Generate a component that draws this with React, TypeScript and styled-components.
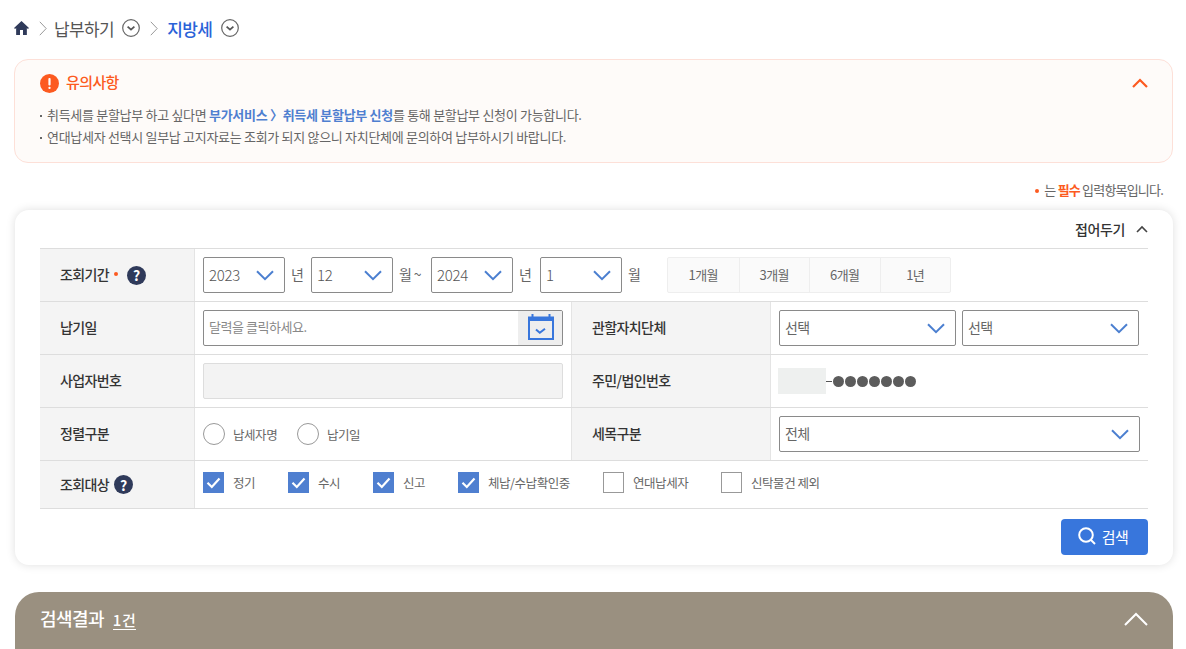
import React from "react";
import styled, { createGlobalStyle } from "styled-components";

const GlobalStyle = createGlobalStyle`
  html, body {
    margin: 0;
    padding: 0;
    height: 649px;
    overflow: hidden;
    background: #fff;
  }
  * { box-sizing: border-box; }
  body {
    font-family: "Noto Sans CJK KR", "Noto Sans", sans-serif;
    color: #555;
    letter-spacing: -0.6px;
  }
`;

const Page = styled.div`
  width: 1186px;
  padding: 0 13px 0 14px;
`;

// --- breadcrumb ---
const Breadcrumb = styled.nav`
  display: flex;
  align-items: center;
  height: 59px;
  padding-bottom: 3px;
`;

const CrumbText = styled.span<{ $active?: boolean }>`
  font-size: 17px;
  font-weight: ${(p) => (p.$active ? 500 : 400)};
  color: ${(p) => (p.$active ? "#2a62d8" : "#555")};
  margin: ${(p) => (p.$active ? "0 9px" : "0 8px 0 7px")};
`;

const CrumbSep = styled.svg`
  width: 8px;
  height: 15px;
  margin-left: 10px;
`;

const CrumbToggle = styled.svg`
  width: 18px;
  height: 18px;
`;

// --- notice ---
const Notice = styled.section`
  height: 104px;
  border: 1px solid #fde0d8;
  border-radius: 14px;
  background: #fefbf9;
  padding: 13px 24px 0 25px;
`;

const NoticeHead = styled.div`
  display: flex;
  align-items: center;
  gap: 7px;
  height: 20px;
`;

const NoticeTitle = styled.h2`
  margin: 0;
  padding-bottom: 3px;
  flex: 1;
  font-size: 15px;
  font-weight: 500;
  color: #fc5a20;
`;

const NoticeList = styled.ul`
  list-style: none;
  margin: 11px 0 0;
  padding: 0;
`;

const NoticeItem = styled.li`
  position: relative;
  padding-left: 7px;
  font-size: 13px;
  line-height: 22px;
  letter-spacing: -0.3px;
  color: #666;
  &::before {
    content: "";
    position: absolute;
    left: 0;
    top: 11px;
    width: 2px;
    height: 2px;
    background: #666;
  }
`;

const NoticeLink = styled.strong`
  color: #4f7fd0;
  font-weight: 700;
`;

const RequiredNote = styled.p`
  margin: 0;
  height: 47px;
  padding: 18px 10px 0 0;
  text-align: right;
  font-size: 13px;
  line-height: 18px;
  letter-spacing: -0.8px;
  color: #666;
`;

const Dot = styled.span`
  display: inline-block;
  flex: none;
  width: 4px;
  height: 4px;
  border-radius: 50%;
  background: #fc5a20;
  vertical-align: middle;
`;

const NoteDot = styled(Dot)`
  margin-right: 3px;
`;

const LabelDot = styled(Dot)`
  margin-left: 5px;
`;

const RequiredWord = styled.strong`
  color: #fc5a20;
  font-weight: 700;
`;

// --- search card ---
const Card = styled.section`
  height: 355px;
  margin-left: 1px;
  background: #fff;
  border-radius: 14px;
  box-shadow: 0 0 10px rgba(0, 0, 0, 0.13);
  padding: 0 25px;
`;

const FoldBar = styled.div`
  display: flex;
  justify-content: flex-end;
  align-items: center;
  gap: 11px;
  height: 38px;
  font-size: 14px;
  font-weight: 500;
  letter-spacing: -0.4px;
  color: #333;
`;

const Table = styled.div`
  border-top: 1px solid #ddd;
`;

const Row = styled.div<{ $height?: number }>`
  display: grid;
  grid-template-columns: 155px 376px 200px 1fr;
  height: ${(p) => p.$height ?? 53}px;
  border-bottom: 1px solid #ddd;
`;

const Label = styled.div`
  display: flex;
  align-items: center;
  padding: 0 0 2px 20px;
  background: #f4f4f4;
  border-right: 1px solid #e4e4e4;
  font-size: 14px;
  font-weight: 500;
  color: #333;
`;

const Label2 = styled(Label)`
  border-left: 1px solid #e4e4e4;
`;

const Cell = styled.div<{ $span?: boolean; $lift?: number }>`
  display: flex;
  align-items: center;
  padding: 0 0 ${(p) => p.$lift ?? 0}px 8px;
  grid-column: ${(p) => (p.$span ? "span 3" : "auto")};
  font-size: 13px;
  color: #555;
`;

const Help = styled.span<{ $left: number }>`
  display: inline-flex;
  align-items: center;
  justify-content: center;
  width: 19px;
  height: 19px;
  margin: 2px 0 0 ${(p) => p.$left}px;
  border-radius: 50%;
  background: #2f3a5a;
  color: #fff;
  font-size: 14px;
  font-weight: 700;
  letter-spacing: 0;
`;

const SelectBox = styled.div<{ $width: number; $gap?: number }>`
  display: flex;
  align-items: center;
  justify-content: space-between;
  flex: none;
  width: ${(p) => p.$width}px;
  height: 36px;
  margin-left: ${(p) => p.$gap ?? 0}px;
  padding: 0 10px 2px 5px;
  border: 1px solid #8a8a8a;
  border-radius: 2px;
  background: #fff;
  font-size: 14px;
  color: #666;
`;

const SelectValue = styled.span<{ $digits?: boolean }>`
  font-size: ${(p) => (p.$digits ? 15 : 14)}px;
  font-weight: ${(p) => (p.$digits ? 300 : 400)};
  letter-spacing: ${(p) => (p.$digits ? "-0.3px" : "-0.6px")};
  color: ${(p) => (p.$digits ? "#555" : "#666")};
`;

const Unit = styled.span<{ $width: number }>`
  flex: none;
  width: ${(p) => p.$width}px;
  padding: 0 0 2px 6px;
  font-size: 14px;
  color: #666;
  white-space: nowrap;
`;

const SelectChevron = styled.svg`
  width: 18px;
  height: 11px;
  margin-top: 2px;
`;

const Quick = styled.div`
  display: flex;
  height: 36px;
  border: 1px solid #eee;
  border-radius: 2px;
  background: #fafafa;
`;

const QuickItem = styled.span`
  width: 70.5px;
  display: flex;
  align-items: center;
  justify-content: center;
  padding-bottom: 2px;
  font-size: 13px;
  color: #666;
  & + & {
    border-left: 1px solid #eee;
  }
`;

const DateField = styled.div`
  display: flex;
  width: 360px;
  height: 36px;
  border: 1px solid #8a8a8a;
  border-radius: 2px;
  overflow: hidden;
`;

const DateText = styled.span`
  flex: 1;
  padding-left: 5px;
  font-size: 13px;
  line-height: 32px;
  letter-spacing: -0.45px;
  color: #888;
`;

const CalendarButton = styled.span`
  width: 44px;
  display: flex;
  align-items: center;
  justify-content: center;
  padding: 0 0 2px 2px;
  background: #eee;
`;

const DisabledField = styled.div`
  width: 360px;
  height: 36px;
  border: 1px solid #ddd;
  border-radius: 2px;
  background: #f3f3f3;
`;

const Masked = styled.div`
  display: flex;
  align-items: center;
  margin-left: -1px;
  color: #555;
`;

const MaskBox = styled.span`
  width: 48px;
  height: 26px;
  background: #eef0ef;
`;

const MaskDash = styled.span`
  width: 6px;
  height: 1px;
  margin-right: 1px;
  background: #555;
`;

const MaskDot = styled.span`
  width: 11px;
  height: 11px;
  margin-right: 1px;
  border-radius: 50%;
  background: #5c5c5c;
`;

const Option = styled.label<{ $width: number }>`
  display: flex;
  align-items: center;
  width: ${(p) => p.$width}px;
  font-size: 12.5px;
  letter-spacing: -0.45px;
  color: #666;
  white-space: nowrap;
`;

const Radio = styled.span`
  width: 22px;
  height: 22px;
  margin-right: 8px;
  border: 1px solid #999;
  border-radius: 50%;
  background: #fff;
`;

const Check = styled.span<{ $on?: boolean }>`
  display: flex;
  align-items: center;
  justify-content: center;
  width: 21px;
  height: 21px;
  margin-right: 9px;
  border: ${(p) => (p.$on ? "none" : "1px solid #999")};
  background: ${(p) => (p.$on ? "#4f7fd0" : "#fff")};
`;

const CardActions = styled.div`
  display: flex;
  justify-content: flex-end;
  padding-top: 10px;
`;

const SearchButton = styled.button`
  display: flex;
  align-items: center;
  justify-content: center;
  gap: 6px;
  width: 87px;
  height: 36px;
  padding: 0 3px 2px 0;
  border: none;
  border-radius: 4px;
  background: #3876dc;
  color: #fff;
  font-family: inherit;
  font-size: 15px;
  letter-spacing: -0.6px;
`;

// --- result ---
const ResultBar = styled.section`
  display: flex;
  align-items: center;
  height: 57px;
  margin: 27px 0 0 1px;
  padding: 0 25px 3px;
  border-radius: 24px 24px 0 0;
  background: #9a9080;
  color: #fff;
`;

const ResultTitle = styled.h2`
  margin: 0 9px 0 0;
  padding-bottom: 3px;
  font-size: 18px;
  font-weight: 500;
`;

const ResultCount = styled.span`
  flex: 1;
  font-size: 15px;
  font-weight: 500;
  letter-spacing: 0.6px;
`;

const CountText = styled.span`
  display: inline-block;
  line-height: 19px;
  border-bottom: 1px solid #fff;
`;

const ChevronDown = () => (
  <SelectChevron viewBox="0 0 18 11" fill="none">
    <path d="M1 1.2 9 9.2 17 1.2" stroke="#4b7fd0" strokeWidth="2" />
  </SelectChevron>
);

const Sep = () => (
  <CrumbSep viewBox="0 0 8 15" fill="none">
    <path d="M.8.8 7.2 7.5.8 14.2" stroke="#999" strokeWidth="1" />
  </CrumbSep>
);

const Toggle = () => (
  <CrumbToggle viewBox="0 0 18 18" fill="none">
    <circle cx="9" cy="9" r="8.3" stroke="#666" strokeWidth="1.2" />
    <path d="M5.6 7.6 9 10.6 12.4 7.6" stroke="#555" strokeWidth="1.8" />
  </CrumbToggle>
);

const CheckMark = () => (
  <svg width="15" height="12" viewBox="0 0 15 12" fill="none">
    <path d="M1.5 5.8 5.8 10 13.5 1.6" stroke="#fff" strokeWidth="2.2" />
  </svg>
);

const targets = [
  { label: "정기", on: true, width: 85 },
  { label: "수시", on: true, width: 85 },
  { label: "신고", on: true, width: 85 },
  { label: "체납/수납확인중", on: true, width: 145 },
  { label: "연대납세자", on: false, width: 118 },
  { label: "신탁물건 제외", on: false, width: 120 },
];

export default function App() {
  return (
    <Page>
      <GlobalStyle />
      <Breadcrumb>
        <svg width="15" height="14" viewBox="0 0 14 13">
          <path d="M7 0 0 6.4 1 7.5 2 6.6V13H5.6V8.4H8.4V13H12V6.6L13 7.5 14 6.4Z" fill="#2f3a5a" />
        </svg>
        <Sep />
        <CrumbText>납부하기</CrumbText>
        <Toggle />
        <Sep />
        <CrumbText $active>지방세</CrumbText>
        <Toggle />
      </Breadcrumb>

      <Notice>
        <NoticeHead>
          <svg width="19" height="19" viewBox="0 0 19 19">
            <circle cx="9.5" cy="9.5" r="9.5" fill="#fc5a20" />
            <rect x="8.4" y="4" width="2.2" height="7.5" rx="1" fill="#fff" />
            <rect x="8.4" y="12.8" width="2.2" height="2.2" rx="1" fill="#fff" />
          </svg>
          <NoticeTitle>유의사항</NoticeTitle>
          <svg width="16" height="10" viewBox="0 0 16 10" fill="none">
            <path d="M1 9 8 2 15 9" stroke="#fc5a20" strokeWidth="2.2" />
          </svg>
        </NoticeHead>
        <NoticeList>
          <NoticeItem>
            취득세를 분할납부 하고 싶다면 <NoticeLink>부가서비스 〉취득세 분할납부 신청</NoticeLink>를 통해 분할납부 신청이 가능합니다.
          </NoticeItem>
          <NoticeItem>
            연대납세자 선택시 일부납 고지자료는 조회가 되지 않으니 자치단체에 문의하여 납부하시기 바랍니다.
          </NoticeItem>
        </NoticeList>
      </Notice>

      <RequiredNote>
        <NoteDot /> 는 <RequiredWord>필수</RequiredWord> 입력항목입니다.
      </RequiredNote>

      <Card>
        <FoldBar>
          접어두기
          <svg width="12" height="8" viewBox="0 0 12 8" fill="none">
            <path d="M1 7 6 2 11 7" stroke="#444" strokeWidth="1.6" />
          </svg>
        </FoldBar>
        <Table>
          <Row>
            <Label>
              조회기간
              <LabelDot />
              <Help $left={9}>?</Help>
            </Label>
            <Cell $span>
              <SelectBox $width={82}><SelectValue $digits>2023</SelectValue><ChevronDown /></SelectBox>
              <Unit $width={26}>년</Unit>
              <SelectBox $width={82}><SelectValue $digits>12</SelectValue><ChevronDown /></SelectBox>
              <Unit $width={38}>월 ~</Unit>
              <SelectBox $width={82}><SelectValue $digits>2024</SelectValue><ChevronDown /></SelectBox>
              <Unit $width={27}>년</Unit>
              <SelectBox $width={82}><SelectValue $digits>1</SelectValue><ChevronDown /></SelectBox>
              <Unit $width={45}>월</Unit>
              <Quick>
                <QuickItem>1개월</QuickItem>
                <QuickItem>3개월</QuickItem>
                <QuickItem>6개월</QuickItem>
                <QuickItem>1년</QuickItem>
              </Quick>
            </Cell>
          </Row>
          <Row>
            <Label>납기일</Label>
            <Cell>
              <DateField>
                <DateText>달력을 클릭하세요.</DateText>
                <CalendarButton>
                  <svg width="26" height="26" viewBox="0 0 26 26" fill="none">
                    <rect x="1" y="3.5" width="24" height="21.5" stroke="#3876dc" strokeWidth="2" />
                    <rect x="1" y="3.5" width="24" height="3.5" fill="#3876dc" />
                    <path d="M4.5 0V3.5M21.5 0V3.5" stroke="#3876dc" strokeWidth="2" />
                    <path d="M8 15.5 11.8 18.8 17 14.8" stroke="#3876dc" strokeWidth="2" />
                  </svg>
                </CalendarButton>
              </DateField>
            </Cell>
            <Label2>관할자치단체</Label2>
            <Cell>
              <SelectBox $width={177}><SelectValue>선택</SelectValue><ChevronDown /></SelectBox>
              <SelectBox $width={177} $gap={6}><SelectValue>선택</SelectValue><ChevronDown /></SelectBox>
            </Cell>
          </Row>
          <Row>
            <Label>사업자번호</Label>
            <Cell>
              <DisabledField />
            </Cell>
            <Label2>주민/법인번호</Label2>
            <Cell>
              <Masked>
                <MaskBox />
                <MaskDash />
                {Array.from({ length: 7 }).map((_, i) => (
                  <MaskDot key={i} />
                ))}
              </Masked>
            </Cell>
          </Row>
          <Row>
            <Label>정렬구분</Label>
            <Cell>
              <Option $width={94}><Radio />납세자명</Option>
              <Option $width={80}><Radio />납기일</Option>
            </Cell>
            <Label2>세목구분</Label2>
            <Cell>
              <SelectBox $width={361}><SelectValue>전체</SelectValue><ChevronDown /></SelectBox>
            </Cell>
          </Row>
          <Row $height={48}>
            <Label>
              조회대상<Help $left={5}>?</Help>
            </Label>
            <Cell $span $lift={4}>
              {targets.map((t) => (
                <Option key={t.label} $width={t.width}>
                  <Check $on={t.on}>{t.on && <CheckMark />}</Check>
                  {t.label}
                </Option>
              ))}
            </Cell>
          </Row>
        </Table>
        <CardActions>
          <SearchButton>
            <svg width="18" height="18" viewBox="0 0 18 18" fill="none">
              <circle cx="8" cy="8" r="6.8" stroke="#fff" strokeWidth="2" />
              <path d="M13 13 17 17" stroke="#fff" strokeWidth="2" />
            </svg>
            검색
          </SearchButton>
        </CardActions>
      </Card>

      <ResultBar>
        <ResultTitle>검색결과</ResultTitle>
        <ResultCount><CountText>1건</CountText></ResultCount>
        <svg width="24" height="14" viewBox="0 0 24 14" fill="none">
          <path d="M1 13 12 2 23 13" stroke="#fff" strokeWidth="2" />
        </svg>
      </ResultBar>
    </Page>
  );
}
